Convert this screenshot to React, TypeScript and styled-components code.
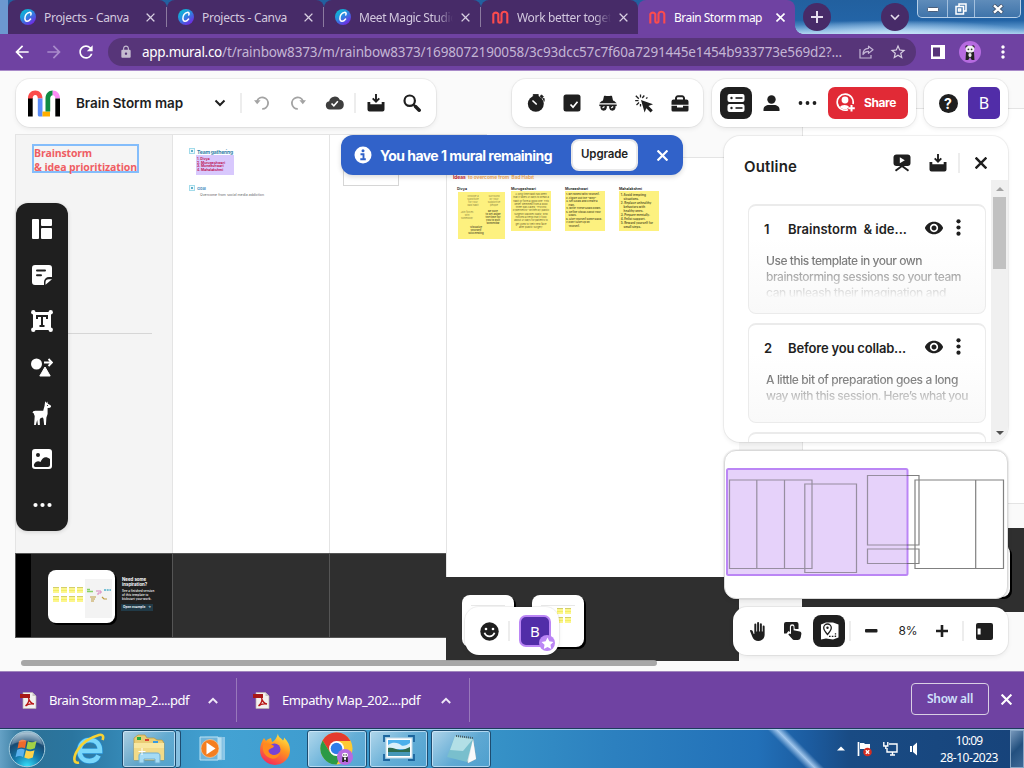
import React, { useLayoutEffect, useRef, useState } from "react";
import styled, { createGlobalStyle, css } from "styled-components";
import { MdArrowBack, MdArrowForward, MdRefresh, MdLock, MdStarBorder, MdMoreVert, MdVisibility, MdBackHand } from "react-icons/md";

const UI = `"Noto Sans", "Open Sans", sans-serif`;
const APP = `Inter, "Liberation Sans", sans-serif`;
const INK = "#1f1f1f";

const Global = createGlobalStyle`
  * { box-sizing: border-box; }
  html, body { margin: 0; padding: 0; }
  body { width: 1024px; height: 768px; overflow: hidden; font-family: ${APP}; color: ${INK}; }
  svg { display: block; flex: none; }
`;

/* Text tracked so that it fills a given measure on one line. */
const Line = styled.span`
  display: inline-block;
  white-space: pre;
  flex: none;
`;
function Tracked({ children, width }: { children: string; width: number }) {
  const ref = useRef<HTMLSpanElement>(null);
  const [space, setSpace] = useState(0);
  useLayoutEffect(() => {
    if (!ref.current) return;
    const natural = ref.current.getBoundingClientRect().width - space * children.length;
    setSpace((width - natural) / children.length);
  }, [children, width]);
  return <Line ref={ref} style={{ letterSpacing: `${space}px` }}>{children}</Line>;
}

const Page = styled.div`
  width: 1024px;
  height: 768px;
  display: flex;
  flex-direction: column;
  overflow: hidden;
`;

/* ---------- Browser chrome ---------- */
const TabStrip = styled.div`
  height: 34px;
  flex: none;
  display: flex;
  padding-left: 8px;
  background:
    linear-gradient(90deg, #6c98d0 0 8px, transparent 8px),
    radial-gradient(ellipse 130px 14px at 900px 34px, rgba(200, 228, 250, 0.9), transparent),
    linear-gradient(180deg, #22609f 0, #2364a6 60%, #5b96cc 82%, #a8d0ee 100%);
`;
const Tab = styled.div<{ $active?: boolean }>`
  position: relative;
  width: 157px;
  height: 34px;
  flex: none;
  display: flex;
  align-items: center;
  padding-left: 11px;
  font: 12px ${UI};
  color: ${(p) => (p.$active ? "#fff" : "#d3c9df")};
  background: ${(p) => (p.$active ? "#6f42a2" : "#472b68")};
  border-radius: 8px 8px 0 0;
  &:first-child {
    width: 159px;
    padding-left: 12px;
  }
  ${(p) => p.$active && css`
    &::after {
      content: "";
      position: absolute;
      right: -8px;
      bottom: 0;
      width: 8px;
      height: 8px;
      background: radial-gradient(circle at 100% 0, transparent 7.5px, #6f42a2 8px);
    }
  `}
`;
const TabTitle = styled.div<{ $fade?: boolean }>`
  width: 94px;
  margin-left: 8px;
  overflow: hidden;
  white-space: nowrap;
  ${(p) => p.$fade && "mask-image: linear-gradient(90deg, #000 82%, transparent 100%);"}
`;
const TabClose = styled.div`
  margin-left: 8px;
  display: flex;
`;
const TabRule = styled.div`
  width: 1px;
  height: 20px;
  margin-left: auto;
  background: #8b7a9f;
`;
const RoundButton = styled.div<{ $left: number }>`
  width: 28px;
  height: 28px;
  flex: none;
  margin: 3px 0 0 ${(p) => p.$left}px;
  border-radius: 50%;
  display: grid;
  place-items: center;
  background: #472b68;
`;
const WindowButtons = styled.div`
  width: 104px;
  height: 18px;
  flex: none;
  margin-left: 8px;
  display: grid;
  grid-template-columns: 29px 27px 46px;
  border: 1px solid #b6cfe8;
  border-top: 0;
  border-radius: 0 0 5px 5px;
  background: linear-gradient(#5f8cba, #3f74aa);
`;
const WindowButton = styled.div`
  display: grid;
  place-items: center;
  & + & { border-left: 1px solid #a3c0de; }
`;
const AddressBar = styled.div`
  height: 37px;
  flex: none;
  display: flex;
  align-items: center;
  padding: 0 0 0 12px;
  background: #6f42a2;
  border-bottom: 1px solid #a98ac9;
`;
const NavIcon = styled.div<{ $dim?: boolean }>`
  width: 20px;
  margin-right: 12px;
  color: ${(p) => (p.$dim ? "#a98bcb" : "#fff")};
`;
const UrlPill = styled.div`
  width: 808px;
  height: 28px;
  border-radius: 14px;
  display: flex;
  align-items: center;
  padding-left: 11px;
  background: #573579;
  color: #c4b5d5;
  font: 13.5px ${UI};
`;
const Host = styled.span`
  color: #fff;
  margin-left: 9px;
`;
const PillIcons = styled.div`
  margin-left: auto;
  margin-right: 9px;
  display: flex;
  align-items: center;
  gap: 15px;
`;
const Profile = styled.div`
  width: 22px;
  height: 22px;
  margin: 0 12px 0 14px;
  border-radius: 50%;
  background: #b66be0;
  display: grid;
  place-items: center;
`;
const SideIcon = styled.div`
  margin-left: 15px;
`;

const Cross = ({ size = 9, color = "#fff", w = 1.8 }: { size?: number; color?: string; w?: number }) => (
  <svg width={size} height={size} viewBox="0 0 10 10" stroke={color} strokeWidth={w} strokeLinecap="square">
    <path d="M1.2 1.2 8.8 8.8M8.8 1.2 1.2 8.8" />
  </svg>
);
const CanvaMark = () => (
  <svg width="16" height="16" viewBox="0 0 16 16">
    <defs>
      <linearGradient id="canva" x1="0" y1="0" x2="0.7" y2="1">
        <stop offset="0" stopColor="#00c8cf" />
        <stop offset="0.5" stopColor="#2a8be0" />
        <stop offset="1" stopColor="#7127e4" />
      </linearGradient>
    </defs>
    <circle cx="8" cy="8" r="8" fill="url(#canva)" />
    <path d="M10.800 6C11.600 4.300 10.800 3.200 9.300 3.400 6.500 3.800 4.700 7 4.900 9.600c.2 3.200 3.200 3.600 5.700.4" fill="none" stroke="#fff" strokeWidth="1.500" strokeLinecap="round" />
  </svg>
);
const MuralMark = () => (
  <svg width="17" height="16" viewBox="0 0 17 16" fill="none" stroke="#fb4b4e" strokeWidth="2.100">
    <path d="M1.300 14.500V5a3 3 0 0 1 5 0v7a1.300 1.300 0 0 0 3.200 0V5a3 3 0 0 1 5.800 0v9.500" />
  </svg>
);
const Panda = ({ size = 18 }: { size?: number }) => (
  <svg width={size} height={size} viewBox="0 0 18 18">
    <circle cx="5.500" cy="3" r="1.700" fill="#222" />
    <circle cx="12.500" cy="3" r="1.700" fill="#222" />
    <path d="M4.500 9h9l.5 9h-3l-2-3-2 3H4z" fill="#222" />
    <ellipse cx="9" cy="5.800" rx="4.800" ry="3.800" fill="#f4f4f4" />
    <ellipse cx="9" cy="12.500" rx="1.800" ry="2.300" fill="#eee" />
    <circle cx="7.200" cy="6" r="1" fill="#333" />
    <circle cx="10.800" cy="6" r="1" fill="#333" />
  </svg>
);

const tabs = [
  { title: "Projects - Canva", width: 85, canva: true },
  { title: "Projects - Canva", width: 85, canva: true },
  { title: "Meet Magic Studio", width: 98, canva: true },
  { title: "Work better together", width: 113, canva: false },
];

function Browser() {
  return (
    <>
      <TabStrip>
        {tabs.map((t, i) => (
          <Tab key={i}>
            {t.canva ? <CanvaMark /> : <MuralMark />}
            <TabTitle $fade={i > 1}><Tracked width={t.width}>{t.title}</Tracked></TabTitle>
            <TabClose><Cross color="#d8cfe2" w={1.5} /></TabClose>
            {i < 3 && <TabRule />}
          </Tab>
        ))}
        <Tab $active>
          <MuralMark />
          <TabTitle><Tracked width={88}>Brain Storm map</Tracked></TabTitle>
          <TabClose><Cross /></TabClose>
        </Tab>
        <RoundButton $left={8}>
          <svg width="12" height="12" stroke="#e6deee" strokeWidth="2"><path d="M6 0v12M0 6h12" /></svg>
        </RoundButton>
        <RoundButton $left={50}>
          <svg width="10" height="7" fill="none" stroke="#e6deee" strokeWidth="1.600"><path d="m1 1 4 4 4-4" /></svg>
        </RoundButton>
        <WindowButtons>
          <WindowButton><svg width="12" height="6"><rect x=".5" y="1.500" width="11" height="4" rx="1" fill="#fff" stroke="#4a5f7c" /></svg></WindowButton>
          <WindowButton>
            <svg width="12" height="12" fill="none" stroke="#fff" strokeWidth="1.500"><path d="M4 3V1h7v7H9" /><rect x="1" y="3.500" width="7.500" height="7.500" /><rect x="3.600" y="6" width="2" height="2" /></svg>
          </WindowButton>
          <WindowButton><svg width="12" height="10" viewBox="0 0 12 10"><path d="M1.500 1 10.500 9M10.500 1 1.500 9" stroke="#42546e" strokeWidth="4" /><path d="M2 1.400 10 8.600M10 1.400 2 8.600" stroke="#fff" strokeWidth="2.300" /></svg></WindowButton>
        </WindowButtons>
      </TabStrip>
      <AddressBar>
        <NavIcon><MdArrowBack size={20} /></NavIcon>
        <NavIcon $dim><MdArrowForward size={20} /></NavIcon>
        <NavIcon><MdRefresh size={20} /></NavIcon>
        <UrlPill>
          <MdLock size={14} color="#c5bcd0" />
          <Host><Tracked width={80}>app.mural.co</Tracked></Host>
          <Tracked width={620}>/t/rainbow8373/m/rainbow8373/1698072190058/3c93dcc57c7f60a7291445e1454b933773e569d2?...</Tracked>
          <PillIcons>
            <svg width="15" height="14" viewBox="0 0 15 14" fill="none" stroke="#c4b5d5" strokeWidth="1.200">
              <path d="M1 4v9h11v-3" /><path d="M9.500 1.200 14 4.800 9.500 8.400V6.300C7 6.300 5.200 7.500 4 9.500c0-3.500 2-6 5.500-6.200z" strokeLinejoin="round" />
            </svg>
            <MdStarBorder size={18} color="#d8cfe2" />
          </PillIcons>
        </UrlPill>
        <SideIcon><svg width="14" height="14"><rect width="14" height="14" fill="#fff" /><rect x="2" y="2.500" width="7" height="9" fill="#573579" /></svg></SideIcon>
        <Profile><Panda size={16} /></Profile>
        <MdMoreVert size={20} color="#fff" />
      </AddressBar>
    </>
  );
}

/* ---------- Mural canvas ---------- */
const Mural = styled.main`
  position: relative;
  height: 600px;
  flex: none;
  overflow: hidden;
  background: #fafafa;
`;
const Area = styled.div<{ $x: number; $y: number; $w: number; $h: number; $bg?: string; $line?: string }>`
  position: absolute;
  left: ${(p) => p.$x}px;
  top: ${(p) => p.$y}px;
  width: ${(p) => p.$w}px;
  height: ${(p) => p.$h}px;
  background: ${(p) => p.$bg ?? "#fff"};
  border: 1px solid ${(p) => p.$line ?? "#e4e4e4"};
`;
const Hairline = styled.div<{ $x: number; $y: number; $w: number; $color: string }>`
  position: absolute;
  left: ${(p) => p.$x}px;
  top: ${(p) => p.$y}px;
  width: ${(p) => p.$w}px;
  height: 1px;
  background: ${(p) => p.$color};
`;
const CanvasCard = styled(Area)`
  border-radius: 8px;
  border-color: transparent;
  box-shadow: 2px 2px 0 #000;
`;
const Note = styled.div<{ $x: number; $y: number; $size?: number; $color?: string; $bold?: boolean; $lh?: number; $w?: number; $h?: number; $bg?: string; $center?: boolean }>`
  position: absolute;
  left: ${(p) => p.$x}px;
  top: ${(p) => p.$y}px;
  ${(p) => p.$w && `width: ${p.$w}px;`}
  ${(p) => p.$h && `height: ${p.$h}px;`}
  background: ${(p) => p.$bg ?? "transparent"};
  font: ${(p) => (p.$bold ? 700 : 400)} ${(p) => p.$size ?? 4}px/${(p) => p.$lh ?? 5}px ${APP};
  color: ${(p) => p.$color ?? "#333"};
  text-align: ${(p) => (p.$center ? "center" : "left")};
  white-space: pre;
`;
const Sticky = styled(Note)`
  background: #fdf17f;
  color: #66612f;
  padding: 2px 1px 0 1px;
`;
const TitleBox = styled.div`
  position: absolute;
  left: 32px;
  top: 73px;
  width: 107px;
  height: 29px;
  border: 2px solid #84bdfb;
  color: #ef5d63;
  font: 700 10.5px/14px "Open Sans", ${APP};
  display: flex;
  flex-direction: column;
  align-items: flex-start;
`;
const Marker = styled.div<{ $y: number }>`
  position: absolute;
  left: 189px;
  top: ${(p) => p.$y}px;
  width: 6px;
  height: 6px;
  border: 1px solid #a3dbea;
  background: radial-gradient(#5fb0cb 0.8px, #effafc 1.300px);
`;
const MiniStickies = styled.div<{ $x: number; $y: number; $cols: number }>`
  position: absolute;
  left: ${(p) => p.$x}px;
  top: ${(p) => p.$y}px;
  display: grid;
  grid-template-columns: repeat(${(p) => p.$cols}, 6px);
  grid-auto-rows: 6px;
  gap: 3px 2px;
`;
const MiniSticky = styled.i`
  background: linear-gradient(#d3cf6a 1px, #fcf68c 1px 3px, #f2ed62 3px 4px, #fcf68c 4px);
`;
const OpenExample = styled.div`
  position: absolute;
  left: 121px;
  top: 533px;
  width: 32px;
  height: 7px;
  padding: 0 2px;
  display: flex;
  justify-content: space-between;
  white-space: nowrap;
  background: #213a47;
  color: #e7f2f5;
  font: 700 3.2px/7px ${APP};
`;
const HScroll = styled.div`
  position: absolute;
  left: 21px;
  top: 589px;
  width: 636px;
  height: 6px;
  border-radius: 3px;
  background: rgba(160, 160, 160, 0.92);
`;
const Specks = styled.svg`
  position: absolute;
  left: 86px;
  top: 506px;
`;

function Canvas() {
  return (
    <>
      <Area $x={15} $y={63} $w={158} $h={504} $bg="#f4f4f4" />
      <Area $x={172} $y={63} $w={158} $h={504} />
      <Area $x={329} $y={63} $w={158} $h={504} />
      <Area $x={343} $y={90} $w={56} $h={25} $line="#d6d6d6" />
      <Hairline $x={68} $y={262} $w={84} $color="#d6d6d6" />
      <Area $x={15} $y={482} $w={158} $h={85} $bg="linear-gradient(90deg,#000 15px,#202020 15px)" $line="#555" />
      <Area $x={172} $y={482} $w={158} $h={85} $bg="#2f2f2f" $line="#555" />
      <Area $x={329} $y={482} $w={158} $h={85} $bg="#2f2f2f" $line="#555" />
      <Area $x={446} $y={86} $w={294} $h={504} />
      <Area $x={446} $y={506} $w={293} $h={84} $bg="#2f2f2f" $line="#2f2f2f" />
      <Area $x={739} $y={86} $w={64} $h={515} $bg="#f5f5f5" $line="transparent" />
      <Area $x={802} $y={37} $w={240} $h={396} />
      <Area $x={739} $y={541} $w={300} $h={60} $bg="#fafafa" $line="transparent" />
      <Area $x={802} $y={457} $w={240} $h={84} $bg="#2f2f2f" $line="#2f2f2f" />
      <CanvasCard $x={900} $y={474} $w={110} $h={52} />

      <TitleBox>
        <Tracked width={58}>Brainstorm</Tracked>
        <Tracked width={103}>{"& idea prioritization"}</Tracked>
      </TitleBox>

      <Marker $y={77} />
      <Note $x={197} $y={78} $size={5} $bold $color="#2f7fa8" $lh={6}><Tracked width={36}>Team gathering</Tracked></Note>
      <Note $x={196} $y={84} $w={38} $h={20} $bg="#d8c8fd" />
      <Note $x={197} $y={87} $size={3.4} $bold $color="#c01f5c" $lh={3.6}>{"1. Divya\n2. Murugeshwari\n3. Muneeshwari\n4. Mahalakshmi"}</Note>
      <Marker $y={114} />
      <Note $x={197} $y={115} $size={4} $bold $color="#4a8fc0" $lh={5}>Goal</Note>
      <Note $x={200} $y={122} $size={3.5} $color="#666"><Tracked width={64}>Overcome from social media addiction</Tracked></Note>

      <Note $x={453} $y={103} $size={4.8} $bold $color="#c8252f" $lh={6}>Ideas</Note>
      <Note $x={468} $y={103} $size={4.8} $bold $color="#f6ad58" $lh={6}><Tracked width={66}>to overcome from  Bad Habit</Tracked></Note>
      <Note $x={457} $y={116} $size={3.6} $bold><Tracked width={10}>Divya</Tracked></Note>
      <Note $x={511} $y={116} $size={3.6} $bold><Tracked width={25}>Murugeshwari</Tracked></Note>
      <Note $x={565} $y={116} $size={3.6} $bold><Tracked width={23}>Muneeshwari</Tracked></Note>
      <Note $x={619} $y={116} $size={3.6} $bold><Tracked width={23}>Mahalakshmi</Tracked></Note>
      <Sticky $x={458} $y={121} $w={47} $h={47} />
      <Note $x={465} $y={125} $w={16} $size={2.5} $lh={2.9} $center $color="#8d8745">{"Choose a\nsubstitute\nfor your\nbad habit"}</Note>
      <Note $x={486} $y={125} $w={16} $size={2.5} $lh={2.9} $center $color="#8d8745">{"Surround\nby your\nsupportive\npeople"}</Note>
      <Note $x={459} $y={141} $w={16} $size={2.4} $lh={2.9} $center $color="#8d8745">{"Join forces\nwith\nsomebody"}</Note>
      <Note $x={483} $y={139} $w={20} $size={2.7} $lh={2.9} $bold $center $color="#6b6536">{"Be sure\nto set aside\nthe time for\nyou to quit\nsomehow"}</Note>
      <Note $x={467} $y={155} $w={18} $size={2.7} $lh={3} $bold $center $color="#6b6536">{"Visualize\nyourself\nsucceeding"}</Note>
      <Sticky $x={511} $y={120} $w={40} $h={40} $size={2.5} $lh={3.3} $center>{"A long time habit has been\nthat it takes 21 days to break a\nhabit or form a good one. This\nbelief stemmed from a book\nthree was called, \"Psycho\nCybernetics\" written by plastic\nsurgeon Maxwell Maltz, who\nnoticed a trend that it took\nabout 21 days for patients to\nget used to their new face\nafter plastic surgery."}</Sticky>
      <Sticky $x={565} $y={120} $w={40} $h={40} $size={2.6} $lh={3.55} $bold>{"1. Be Honest with Yourself.\n2. Figure Out the \"Why\"\n3. Set Goals and Create a\n    Plan.\n4. Write These Goals Down.\n5. Define Visual About Your\n    Goals.\n6. Give Yourself Some Slack.\n7. Don't Give Up on\n    Yourself."}</Sticky>
      <Sticky $x={619} $y={120} $w={40} $h={40} $size={3} $lh={4} $bold>{" 1. Avoid tempting\n     situations.\n 2. Replace unhealthy\n     behaviors with\n     healthy ones.\n 3. Prepare mentally.\n 4. Enlist support.\n 5. Reward yourself for\n     small steps."}</Sticky>

      <CanvasCard $x={48} $y={499} $w={67} $h={53} />
      <Area $x={85} $y={508} $w={27} $h={39} $bg="#f3f3f3" $line="#f3f3f3" />
      <MiniStickies $x={53} $y={516} $cols={4}>{Array.from({ length: 8 }, (_, i) => <MiniSticky key={i} />)}</MiniStickies>
      <Specks width="26" height="28">
        <path d="M1 14.500h6M1 12.500h3" stroke="#86cf67" strokeWidth="1.500" />
        <path d="M10 14h5v2h-3v2" stroke="#d983bd" fill="none" />
        <path d="M18 13h7" stroke="#4fb0cc" strokeWidth="1.500" strokeDasharray="2 .7" />
        <path d="M4 20h6M5 22h4M5 24h3M16 20l2 2h3" stroke="#bf9b40" fill="none" strokeWidth="1.200" />
      </Specks>
      <Note $x={122} $y={506} $size={4.4} $lh={5} $bold $color="#fff">{"Need some\ninspiration?"}</Note>
      <Note $x={122} $y={518} $size={3} $lh={4} $color="#ddd" $bold>{"See a finished version\nof this template to\nkickstart your work."}</Note>
      <OpenExample><span>Open example</span><span>→</span></OpenExample>

      <CanvasCard $x={462} $y={524} $w={52} $h={52} />
      <CanvasCard $x={532} $y={524} $w={52} $h={52} />
      <Hairline $x={471} $y={534} $w={34} $color="#e8e8e8" />
      <Hairline $x={541} $y={534} $w={34} $color="#e8e8e8" />
      <MiniStickies $x={557} $y={537} $cols={2}>{Array.from({ length: 4 }, (_, i) => <MiniSticky key={i} />)}</MiniStickies>
      <HScroll />
    </>
  );
}

/* ---------- Floating panels ---------- */
const Panel = styled.div<{ $x: number; $y: number; $w: number; $h: number; $r?: number }>`
  position: absolute;
  left: ${(p) => p.$x}px;
  top: ${(p) => p.$y}px;
  width: ${(p) => p.$w}px;
  height: ${(p) => p.$h}px;
  border-radius: ${(p) => p.$r ?? 14}px;
  background: #fff;
  box-shadow: 0 0 0 1px rgba(0, 0, 0, 0.05), 0 2px 5px rgba(0, 0, 0, 0.07);
  display: flex;
  align-items: center;
`;
const Slot = styled.div<{ $w?: number }>`
  width: ${(p) => p.$w ?? 36}px;
  flex: none;
  display: flex;
  align-items: center;
  justify-content: center;
`;
const Rule = styled.div`
  width: 2px;
  height: 20px;
  flex: none;
  background: #ededed;
`;
const BoardName = styled.div`
  margin-left: 16px;
  width: 126px;
  font: 600 13.5px ${APP};
`;
const Square = styled.div<{ $bg: string }>`
  width: 32px;
  height: 32px;
  flex: none;
  border-radius: 8px;
  background: ${(p) => p.$bg};
  display: grid;
  place-items: center;
`;
const Avatar = styled(Square)`
  border-radius: 5px;
  color: #fff;
  font: 16px ${UI};
`;
const Facilitator = styled(Avatar)`
  position: relative;
  border: 2px solid #bb86f5;
  border-radius: 7px;
  font-size: 15px;
`;
const StarBadge = styled.div`
  position: absolute;
  right: -6px;
  bottom: -6px;
  width: 16px;
  height: 16px;
  border-radius: 50%;
  background: #bb86f5;
  display: grid;
  place-items: center;
`;
const ShareButton = styled.div`
  width: 80px;
  height: 32px;
  border-radius: 7px;
  background: #e12a36;
  color: #fff;
  display: flex;
  align-items: center;
  gap: 9px;
  padding-left: 8px;
  padding-bottom: 1px;
  font: 700 12px ${APP};
`;
const Zoom = styled.div`
  width: 34px;
  display: flex;
  justify-content: center;
  padding-bottom: 2px;
  font: 12px ${APP};
`;

const ChevronDown = () => <svg width="12" height="8" fill="none" stroke={INK} strokeWidth="2"><path d="m1.500 1.500 4.500 4.500 4.500-4.500" /></svg>;
const Dots = ({ color = INK, r = 2.1 }: { color?: string; r?: number }) => (
  <svg width="19" height="6" fill={color}><circle cx="2.500" cy="3" r={r} /><circle cx="9.500" cy="3" r={r} /><circle cx="16.500" cy="3" r={r} /></svg>
);
const Kebab = () => <svg width="5" height="17" fill={INK}><circle cx="2.500" cy="2.300" r="2.100" /><circle cx="2.500" cy="8.500" r="2.100" /><circle cx="2.500" cy="14.700" r="2.100" /></svg>;
const ExportIcon = () => (
  <svg width="18" height="18" viewBox="0 0 18 18">
    <path d="M.5 8h2.800v2.300h11.400V8h2.800v7.500a2 2 0 0 1-2 2h-13a2 2 0 0 1-2-2z" fill={INK} />
    <path d="M9 0v7.500M5.700 4.300 9 7.600l3.300-3.300" fill="none" stroke={INK} strokeWidth="1.900" />
  </svg>
);
const Logo = () => (
  <svg width="32" height="27" viewBox="0 0 32 27">
    <path d="M0 8v18.500h4.700V8z" fill="#000" />
    <path d="M0 8.500C0 3.500 3 .5 7.300.5c4.200 0 7.200 3 7.200 8H9.800c0-2.200-.8-3.500-2.500-3.500S4.700 6.300 4.700 8.500z" fill="#fb4b4b" />
    <path d="M9.800 8.500h4.700v18H11c-.7 0-1.200-.8-1.200-2z" fill="#5b8df8" />
    <path d="M14.500 21.500h7.500v5h-7.500z" fill="#ffae00" />
    <path d="M17.500 21.500v-13c0-5 3-8 7.200-8v4.700c-1.500.3-2.500 1.300-2.500 3.300v13z" fill="#0f8a43" />
    <path d="M24.700.5c4.300 0 7.300 3 7.300 8h-4.700c0-2-.9-3.300-2.600-3.300z" fill="#fc8cf5" />
    <path d="M27.300 8.500H32v18h-4.700z" fill="#000" />
  </svg>
);
const Undo = ({ flip }: { flip?: boolean }) => (
  <svg width="16" height="14" viewBox="0 0 16 14" fill="none" stroke="#a3a3a3" strokeWidth="1.800">
    <g transform={flip ? "translate(16 0) scale(-1 1)" : undefined}>
      <path d="M3 5.200A5.700 5.700 0 1 1 8.200 12.800" /><path d="M0 4.200h6.600L3.200 8.200z" fill="#a3a3a3" stroke="none" />
    </g>
  </svg>
);
const CloudSaved = () => (
  <svg width="19" height="14" viewBox="0 0 20 15">
    <path d="M5 14.500a4.500 4.500 0 0 1-.7-8.900A6 6 0 0 1 15.600 4a5.300 5.300 0 0 1-.6 10.500z" fill="#3e3e3e" />
    <path d="m6.800 8 2.500 2.500 4.300-4.800" fill="none" stroke="#fff" strokeWidth="1.700" />
  </svg>
);
const Magnifier = () => (
  <svg width="18" height="18" viewBox="0 0 18 18" fill="none" stroke={INK}>
    <circle cx="6.700" cy="6.700" r="5.200" strokeWidth="2.200" /><path d="m10.500 10.500 2 2" strokeWidth="2" /><path d="m12.500 12.500 3.700 3.700" strokeWidth="3.500" strokeLinecap="round" />
  </svg>
);
const Timer = () => (
  <svg width="18" height="18" viewBox="0 0 18 18">
    <circle cx="8.800" cy="9.800" r="8" fill={INK} /><path d="M6.300.3H11.200v3H6.300zM13 2.500 14.500.8l1.900 1.900L15 4.200zM15.500 4.500h1.700v3" fill={INK} stroke={INK} strokeWidth=".8" />
    <path d="m6 7 3.200 3" stroke="#fff" strokeWidth="1.700" strokeLinecap="round" />
  </svg>
);
const Vote = () => (
  <svg width="18" height="18"><rect x=".5" y=".5" width="17" height="17" rx="2.500" fill={INK} /><path d="m7.500 10.500 2.500 2.700 4.500-5.400" fill="none" stroke="#fff" strokeWidth="1.700" /></svg>
);
const Incognito = () => (
  <svg width="18" height="17" viewBox="0 0 18 17">
    <path d="M5 1C6 .2 7.500 1 9 1s3-.8 4 0l1.200 5.200H3.800z" fill={INK} />
    <path d="M3 5.800h12l2.700 2.400H.3z" fill={INK} />
    <path d="M.3 9.500h17.400v1.600H.3z" fill={INK} />
    <path d="M1.500 10h6.300v3a3.200 3.200 0 0 1-6.300 0zM10.200 10h6.300v3a3.200 3.200 0 0 1-6.300 0z" fill={INK} />
    <path d="m3.500 13 2-1.500M12.200 13l2-1.500" stroke="#fff" strokeWidth="1.200" />
  </svg>
);
const Laser = () => (
  <svg width="19" height="19" viewBox="0 0 19 19">
    <path d="M6 6l12 4.300-4.500 1.700 4.300 4.300-2.200 2.200-4.300-4.300L9.600 18.500z" fill={INK} />
    <path d="M5.500 3.500V.5M3.800 4.800l-3-3M3.500 6.700H.2M4 8.500l-2.500 2.500M7.300 4l2-2.500M11 4.500l1.500-1M5.500 10v2.500" stroke={INK} strokeWidth="1.300" />
  </svg>
);
const Toolbox = () => (
  <svg width="18" height="17" viewBox="0 0 18 17">
    <path d="M5 5V3.200A1.900 1.900 0 0 1 6.900 1.300h4.200A1.900 1.900 0 0 1 13 3.200V5" fill="none" stroke={INK} strokeWidth="2" />
    <path d="M2.500 4.500h13a2 2 0 0 1 2 2v3.200H.5V6.500a2 2 0 0 1 2-2zM.5 10.800H6v1.700h6v-1.700h5.500V15a1.500 1.500 0 0 1-1.500 1.500H2A1.500 1.500 0 0 1 .5 15z" fill={INK} />
  </svg>
);
const OutlineIcon = () => (
  <svg width="18" height="18"><rect x=".5" y="0" width="17" height="8" rx="2" fill="#fff" /><rect x=".5" y="10" width="17" height="8" rx="2" fill="#fff" /><g fill={INK}><circle cx="4.500" cy="4" r="1.200" /><circle cx="4.500" cy="14" r="1.200" /><rect x="8.500" y="3.200" width="7" height="1.600" /><rect x="8.500" y="13.200" width="7" height="1.600" /></g></svg>
);
const Person = () => (
  <svg width="17" height="17" fill={INK}><circle cx="8.500" cy="4.500" r="4.200" /><path d="M.5 16v-1.500c0-3 2.500-4.500 5.500-4.500h5c3 0 5.500 1.500 5.500 4.500V16z" /></svg>
);
const SharePerson = () => (
  <svg width="19" height="19" viewBox="0 0 19 19" fill="none" stroke="#fff">
    <path d="M12 16.700A8 8 0 1 1 17 11" strokeWidth="1.700" /><circle cx="9" cy="7" r="3.400" fill="#fff" stroke="none" />
    <path d="M4 14c1-2.800 8-2.800 9 0l-2 2c-2 .7-4 .5-6-1z" fill="#fff" stroke="none" /><path d="M15.500 12v6.500M12.300 15.300h6.500" strokeWidth="2" />
  </svg>
);
const Help = styled.div`
  width: 19px;
  height: 19px;
  border-radius: 50%;
  background: ${INK};
  color: #fff;
  font: 700 14px/19px ${APP};
  text-align: center;
`;

function TopBars() {
  return (
    <>
      <Panel $x={16} $y={8} $w={420} $h={48}>
        <Slot $w={12} />
        <Logo />
        <BoardName><Tracked width={107}>Brain Storm map</Tracked></BoardName>
        <Slot><ChevronDown /></Slot>
        <Slot $w={2} />
        <Rule />
        <Slot $w={40}><Undo /></Slot>
        <Slot $w={32}><Undo flip /></Slot>
        <Slot $w={40}><CloudSaved /></Slot>
        <Rule />
        <Slot $w={40}><ExportIcon /></Slot>
        <Slot $w={32}><Magnifier /></Slot>
      </Panel>
      <Panel $x={512} $y={8} $w={191} $h={48}>
        <Slot $w={6} />
        <Slot><Timer /></Slot>
        <Slot><Vote /></Slot>
        <Slot><Incognito /></Slot>
        <Slot><Laser /></Slot>
        <Slot><Toolbox /></Slot>
      </Panel>
      <Panel $x={712} $y={8} $w={204} $h={48}>
        <Slot $w={8} />
        <Square $bg={INK}><OutlineIcon /></Square>
        <Slot $w={39}><Person /></Slot>
        <Slot $w={33}><Dots r={1.900} /></Slot>
        <Slot $w={4} />
        <ShareButton><SharePerson /><Tracked width={32}>Share</Tracked></ShareButton>
      </Panel>
      <Panel $x={924} $y={8} $w={84} $h={48}>
        <Slot $w={44}><Slot $w={4} /><Help>?</Help></Slot>
        <Avatar $bg="#512da8">B</Avatar>
      </Panel>
    </>
  );
}

/* Side tool rail */
const Rail = styled.nav`
  position: absolute;
  left: 16px;
  top: 132px;
  width: 52px;
  height: 328px;
  padding: 3px 0;
  border-radius: 12px;
  background: ${INK};
  box-shadow: 0 1px 4px rgba(0, 0, 0, 0.15);
  display: grid;
  grid-auto-rows: 46px;
  place-items: center;
`;
const ToolRail = () => (
  <Rail>
    <svg width="20" height="20" fill="#fff"><rect width="7" height="20" rx="1" /><rect x="9" width="11" height="7" rx="1" /><rect x="9" y="9" width="11" height="11" rx="1" /></svg>
    <svg width="20" height="20"><path d="M3 0h14a3 3 0 0 1 3 3v9h-3a5 5 0 0 0-5 5V20H3a3 3 0 0 1-3-3V3a3 3 0 0 1 3-3z" fill="#fff" /><path d="M5 5.500h8M5 10.300h4" stroke={INK} strokeWidth="2" strokeLinecap="round" /><path d="M13.500 19.800v-2.300a3.300 3.300 0 0 1 3.300-3.300H20z" fill="#fff" /></svg>
    <svg width="22" height="22" fill="#fff"><rect x="2" y="2" width="18" height="18" /><circle cx="2.300" cy="2.300" r="2.200" /><circle cx="19.700" cy="2.300" r="2.200" /><circle cx="2.300" cy="19.700" r="2.200" /><circle cx="19.700" cy="19.700" r="2.200" /><path d="M6 9V6h10v3M11 6v10M8.500 16h5" fill="none" stroke={INK} strokeWidth="2" /></svg>
    <svg width="22" height="19"><circle cx="5.500" cy="6" r="5.500" fill="#fff" /><path d="m14 9 5.200 9H8.800z" fill="#fff" stroke="#fff" strokeLinejoin="round" /><path d="M13 4.500h8M17.500 1 21 4.500 17.500 8" fill="none" stroke="#fff" strokeWidth="1.900" /></svg>
    <svg width="20" height="24" viewBox="0 0 20 24" fill="#fff"><path d="M13.200.3 14.500 2l.8-1.500.5 2.200 2.800 1.500.5 1.300-1 1.200-2.500.3v6l-1.200 3.500-.5 8h-1.700l-.7-6.500-.6-1.500-2.200.5-1 1.500.2 6H6l-.8-5.500L3.800 24H2.100l.6-9L1.500 12 .5 12 1.200 10.300c2-.8 6-.3 10-.6L12.500 5z" /><circle cx="15.500" cy="4.500" r=".6" fill={INK} /></svg>
    <svg width="20" height="20"><rect width="20" height="20" rx="3" fill="#fff" /><circle cx="6" cy="6" r="2" fill={INK} /><path d="M2 15.500c1.500-3 4-4 6.500-2.500 2-4.500 5-6.500 9.500-3v6a2 2 0 0 1-2 2H3.500c-1.200 0-2-1-1.500-2.500z" fill={INK} /></svg>
    <Dots color="#fff" />
  </Rail>
);

/* Upgrade banner */
const Banner = styled.div`
  position: absolute;
  left: 341px;
  top: 64px;
  width: 342px;
  height: 40px;
  padding-left: 13px;
  border-radius: 12px;
  background: #3162c9;
  box-shadow: 0 2px 5px rgba(0, 0, 0, 0.15);
  display: flex;
  align-items: center;
  color: #fff;
  font: 700 14px ${APP};
`;
const BannerText = styled.div`
  width: 191px;
  margin-left: 8px;
`;
const Upgrade = styled.div`
  width: 67px;
  height: 32px;
  margin-right: 19px;
  border: 2px solid #e9e9ea;
  border-radius: 8px;
  background: #fff;
  color: ${INK};
  display: grid;
  place-items: center;
  font: 600 11.500px ${APP};
  padding-bottom: 2px;
`;
const UpgradeBanner = () => (
  <Banner>
    <svg width="18" height="18"><circle cx="9" cy="9" r="8.500" fill="#fff" /><circle cx="9" cy="4.800" r="1.500" fill="#3162c9" /><path d="M6.500 8.200H9.500V13M6.300 13.300h5.500" fill="none" stroke="#3162c9" strokeWidth="1.900" /></svg>
    <BannerText><Tracked width={172}>You have 1 mural remaining</Tracked></BannerText>
    <Upgrade><Tracked width={47}>Upgrade</Tracked></Upgrade>
    <Cross size={11} w={2} />
  </Banner>
);

/* Outline panel */
const OutlinePanel = styled(Panel)`
  flex-direction: column;
  align-items: stretch;
  overflow: hidden;
`;
const OutlineHead = styled.div`
  height: 44px;
  flex: none;
  display: flex;
  align-items: center;
  padding: 10px 0 0 20px;
`;
const OutlineTitle = styled.div`
  width: 148px;
  padding-top: 6px;
  font: 600 15px ${APP};
`;
const OutlineBody = styled.div`
  flex: 1;
  display: flex;
  min-height: 0;
`;
const CardList = styled.div`
  width: 267px;
  padding: 24px 5px 0 24px;
  display: flex;
  flex-direction: column;
  gap: 9px;
  overflow: hidden;
`;
const OutlineCard = styled.div<{ $h: number }>`
  height: ${(p) => p.$h}px;
  flex: none;
  border: 1px solid #ebebeb;
  border-top-width: 2px;
  border-radius: 8px;
  background: linear-gradient(#fff 30%, #f9f9f9);
  overflow: hidden;
`;
const CardHead = styled.div`
  height: 43px;
  display: flex;
  align-items: center;
  padding-left: 15px;
  font: 600 13px ${APP};
`;
const CardNumber = styled.div`
  width: 24px;
  padding-top: 2px;
`;
const CardTitle = styled.div`
  width: 136px;
  padding-top: 2px;
`;
const CardText = styled.div<{ $h: number }>`
  height: ${(p) => p.$h}px;
  padding-left: 17px;
  margin-top: 4px;
  display: flex;
  flex-direction: column;
  align-items: flex-start;
  font: 500 12px/16px ${APP};
  color: #666;
  overflow: hidden;
  mask-image: linear-gradient(#000 0, rgba(0, 0, 0, 0.75) 30%, rgba(0, 0, 0, 0.16) 88%, transparent 100%);
`;
const Scrollbar = styled.div`
  width: 17px;
  background: #f0f0f0;
  display: flex;
  flex-direction: column;
  align-items: center;
  padding: 7px 0;
`;
const Thumb = styled.div`
  width: 13px;
  height: 72px;
  margin: 6px 0 auto;
  background: #c1c1c1;
`;

const cards = [
  { n: "1", title: "Brainstorm  & ide...", tw: 119, h: 110, th: 45, lines: [["Use this template in your own", 156], ["brainstorming sessions so your team", 195], ["can unleash their imagination and", 180]] },
  { n: "2", title: "Before you collab...", tw: 118, h: 100, th: 36, lines: [["A little bit of preparation goes a long", 192], ["way with this session. Here’s what you", 202]] },
] as const;

const Outline = () => (
  <OutlinePanel $x={724} $y={65} $w={284} $h={306} $r={16}>
    <OutlineHead>
      <OutlineTitle><Tracked width={53}>Outline</Tracked></OutlineTitle>
      <Slot $w={20}>
        <svg width="18" height="18" viewBox="0 0 18 18"><rect x=".5" y=".5" width="17" height="11.500" rx="3" fill={INK} /><path d="m6.800 3.300 5 3-5 3z" fill="#fff" /><path d="M2.500 16.800 9 12l6.500 4.800" fill="none" stroke={INK} strokeWidth="1.900" /></svg>
      </Slot>
      <Slot $w={16} />
      <Slot $w={20}><ExportIcon /></Slot>
      <Slot $w={10} />
      <Rule />
      <Slot $w={41}><Cross size={12} color={INK} w={2} /></Slot>
    </OutlineHead>
    <OutlineBody>
      <CardList>
        {cards.map((c) => (
          <OutlineCard key={c.n} $h={c.h}>
            <CardHead>
              <CardNumber>{c.n}</CardNumber>
              <CardTitle><Tracked width={c.tw}>{c.title}</Tracked></CardTitle>
              <MdVisibility size={20} />
              <Slot $w={28}><Kebab /></Slot>
            </CardHead>
            <CardText $h={c.th}>
              {c.lines.map(([text, w]) => <Tracked key={text} width={w}>{text}</Tracked>)}
            </CardText>
          </OutlineCard>
        ))}
        <OutlineCard $h={100} />
      </CardList>
      <Scrollbar>
        <svg width="8" height="4"><path d="M0 4 4 0l4 4z" fill="#a3a3a3" /></svg>
        <Thumb />
        <svg width="8" height="4"><path d="M0 0h8L4 4z" fill="#505050" /></svg>
      </Scrollbar>
    </OutlineBody>
  </OutlinePanel>
);

const MapPanel = styled(Panel)`
  border: 1px solid #d9d9d9;
`;
const Minimap = () => (
  <MapPanel $x={724} $y={379} $w={284} $h={149} $r={12}>
    <svg width="282" height="147" viewBox="725 451 282 147" fill="none" stroke="#555" strokeOpacity=".75" strokeWidth="1.200">
      <rect x="727" y="469" width="180.500" height="106" rx="1.500" fill="#e6d2fa" stroke="#bb86f5" strokeOpacity="1" strokeWidth="2" />
      <g strokeOpacity=".55"><path d="M729.500 480H812v88.500H729.500zM756.800 480v88.500M784.500 480v88.500M804.800 484h51.700v88.500h-51.700z" />
        <path d="M907 475.500h-39.500V545H907M907 549h-39.500v14.500H907" /></g>
      <path d="M907 475.500h12V545h-12M907 549h12v14.500h-12M915 480h88.500v88.500H915zM975.700 480v88.500" />
    </svg>
  </MapPanel>
);

function BottomBars() {
  return (
    <>
      <Panel $x={733} $y={536} $w={275} $h={48}>
        <Slot $w={6} />
        <Slot><MdBackHand size={19} /></Slot>
        <Slot>
          <svg width="18" height="18" viewBox="0 0 18 18"><path d="M2 0h10.500a2 2 0 0 1 2 2v5h-3l-1-.5V4.500a2.300 2.300 0 0 0-4.600 0V10L4.500 9l-2 2.500H0V2a2 2 0 0 1 2-2z" fill={INK} /><path d="M7 5a1.300 1.300 0 0 1 2.600 0v3.200l6.200 1.400c1 .3 1.700 1 1.600 2.200l-.7 3.700A3 3 0 0 1 14 18h-3.500c-1 0-1.600-.4-2.200-1l-4-4.500 1.200-1L7 12z" fill={INK} /></svg>
        </Slot>
        <Slot $w={2} />
        <Square $bg={INK}>
          <svg width="19" height="18" viewBox="0 0 19 18"><path d="M1 2.500 6 .5h7l5.500 2v13l-5.500 2-7-1-5 1z" fill="#fff" /><path d="M7.500 12.500C4 8.500 3.700 7.500 3.700 5.800a3.800 3.800 0 0 1 7.600 0c0 1.700-.3 2.700-3.800 6.700z" fill="#fff" stroke={INK} strokeWidth="1.300" /><circle cx="7.500" cy="5.800" r="1.200" fill={INK} /><path d="M9 14.300h6.500v-3" fill="none" stroke={INK} strokeWidth="1.300" strokeDasharray="1.600 1.200" /></svg>
        </Square>
        <Slot $w={4} />
        <Rule />
        <Slot $w={40}><svg width="13" height="4"><rect width="12.500" height="3.600" rx="1" fill={INK} /></svg></Slot>
        <Zoom><Tracked width={19}>8%</Tracked></Zoom>
        <Slot $w={34}><svg width="12" height="12" stroke={INK} strokeWidth="2.600"><path d="M6 0v12M0 6h12" /></svg></Slot>
        <Slot $w={3} />
        <Rule />
        <Slot $w={40}><svg width="17" height="17"><rect width="17" height="17" rx="2" fill={INK} /><rect x="1.600" y="5.500" width="3" height="6" fill="#fff" /></svg></Slot>
      </Panel>
      <Panel $x={465} $y={536} $w={94} $h={48}>
        <Slot $w={5} />
        <Slot $w={38}><svg width="19" height="19"><circle cx="9.500" cy="9.500" r="9.200" fill={INK} /><g fill="#fff"><circle cx="6" cy="7" r="1.300" /><circle cx="13" cy="7" r="1.300" /></g><path d="M4.500 10.800a5.300 5.300 0 0 0 10 0" fill="none" stroke="#fff" strokeWidth="1.800" /></svg></Slot>
        <Rule />
        <Slot $w={9} />
        <Facilitator $bg="#512da8">B
          <StarBadge><svg width="13" height="13" viewBox="0 0 24 24"><path d="m12 1 3.400 7 7.600 1.100-5.500 5.300 1.300 7.600L12 18.400 5.200 22l1.300-7.600L1 9.100 8.600 8z" fill="#fff" /></svg></StarBadge>
        </Facilitator>
      </Panel>
    </>
  );
}

/* ---------- Downloads shelf ---------- */
const Shelf = styled.div`
  height: 57px;
  flex: none;
  display: flex;
  align-items: center;
  background: #6f42a2;
  border-top: 1px solid #a085bd;
  color: #fff;
  font: 13px ${UI};
`;
const Download = styled.div<{ $w: number; $pad: number }>`
  width: ${(p) => p.$w}px;
  height: 44px;
  padding: 0 18px 0 ${(p) => p.$pad}px;
  border-right: 1px solid #9878bb;
  display: flex;
  align-items: center;
  gap: 12px;
`;
const Push = styled.div`
  margin-left: auto;
`;
const ShowAll = styled.div`
  width: 78px;
  height: 32px;
  margin: 0 12px 3px auto;
  border: 1px solid #d9cfe4;
  border-radius: 4px;
  display: grid;
  place-items: center;
  color: #cfe0fb;
  font: 600 12px ${UI};
`;
const CloseShelf = styled.div`
  margin: 0 12px 2px 0;
`;
const Pdf = () => (
  <svg width="17" height="17"><path d="M3 .5h9.500L16 4v12.500H3z" fill="#f2f0ee" stroke="#b9b2ae" strokeWidth=".7" /><path d="M12.500.5V4H16z" fill="#c9c5c2" /><path d="M0 2h10v4H0z" fill="#a81717" /><path d="M8.500 6c1.500 3-1 6-3 8 2-1.800 5.500-2.500 8.500-2-3-.5-4.500-2.500-5.500-6z" fill="none" stroke="#b81818" strokeWidth="1.300" /></svg>
);
const Up = () => <svg width="10" height="7" fill="none" stroke="#efe8f6" strokeWidth="1.900"><path d="m.8 6 4.200-4.200L9.200 6" /></svg>;

const Downloads = () => (
  <Shelf>
    <Download $w={237} $pad={20}><Pdf /><Tracked width={140}>Brain Storm map_2....pdf</Tracked><Push><Up /></Push></Download>
    <Download $w={233} $pad={16}><Pdf /><Tracked width={138}>Empathy Map_202....pdf</Tracked><Push><Up /></Push></Download>
    <ShowAll><Tracked width={46}>Show all</Tracked></ShowAll>
    <CloseShelf><Cross size={11} w={1.900} /></CloseShelf>
  </Shelf>
);

/* ---------- Taskbar ---------- */
const Bar = styled.div`
  height: 40px;
  flex: none;
  display: flex;
  align-items: center;
  border-top: 1px solid #1e3c5d;
  box-shadow: inset 0 1px 0 rgba(190, 220, 245, 0.8);
  color: #fff;
  font: 12px ${UI};
  background:
    linear-gradient(45deg, transparent 40%, rgba(184, 216, 248, 0.85) 50%, transparent 60%) 768px 0 / 56px 40px no-repeat,
    linear-gradient(90deg, #65a1c5 0, #2d7297 2.500%, #2a759f 7%, #3990bf 14%, #43a2d3 22%, #3692c7 48%, #2c80bf 60%, #2270b8 74%, #1c5ca0 79%, #194b84 83%, #17437a 100%);
`;
const Task = styled.div<{ $w: number; $open?: boolean; $gap?: number }>`
  width: ${(p) => p.$w}px;
  height: 38px;
  flex: none;
  margin-left: ${(p) => p.$gap ?? 0}px;
  display: grid;
  place-items: center;
  ${(p) => p.$open && css`
    border: 1px solid #1d4c70;
    border-radius: 3px;
    box-shadow: inset 0 0 0 1px rgba(220, 240, 255, 0.65);
    background: linear-gradient(135deg, rgba(255, 255, 255, 0.6), rgba(255, 255, 255, 0.2) 55%, rgba(255, 255, 255, 0.12));
  `}
`;
const Stack = styled.div`
  width: 5px;
  height: 38px;
  border: 1px solid #1d4c70;
  border-left: 0;
  border-radius: 0 3px 3px 0;
  background: rgba(220, 240, 255, 0.45);
`;
const Tray = styled.div`
  margin-left: auto;
  display: flex;
  align-items: center;
`;
const TrayIcons = styled.div`
  width: 81px;
  display: flex;
  align-items: center;
  justify-content: space-between;
`;
const Clock = styled.div`
  width: 60px;
  margin: 0 11px 0 21px;
  display: flex;
  flex-direction: column;
  align-items: center;
  line-height: 17px;
`;
const Peek = styled.div`
  width: 14px;
  height: 38px;
  border: 1px solid #86a6c6;
  background: linear-gradient(135deg, #7797bb, #23507f 50%, #3e6996);
`;

const Start = () => (
  <svg width="38" height="38" viewBox="0 0 38 38">
    <defs>
      <radialGradient id="orb" cx=".5" cy="1" r=".95"><stop offset="0" stopColor="#35e2fc" /><stop offset=".4" stopColor="#167cad" /><stop offset=".75" stopColor="#174a73" /><stop offset="1" stopColor="#93b3c8" /></radialGradient>
    </defs>
    <circle cx="19" cy="19" r="17.800" fill="url(#orb)" stroke="#a3cbdc" strokeWidth="1" />
    <path d="M11 11c3-1.800 5-1.500 7.500-.2l-1.500 7.500c-2.500-1.300-4.500-1.200-7.500.2z" fill="#ee6a2c" />
    <path d="M19.800 11.300c3 1.500 5.500 1 8.700-.4l-1.700 7.400c-3 1.500-5.500 1.500-8.400.1z" fill="#a2d146" />
    <path d="M9.200 19.800c3-1.300 5-1.300 7.500 0L15 27c-2.500-1.300-4.500-1.200-7.500.2z" fill="#5ab1ee" />
    <path d="M18 20.300c3 1.500 5.500 1.300 8.500 0L24.800 27.500c-3 1.500-5.500 1.500-8.500 0z" fill="#fed34b" />
    <path d="M3.500 15C6 5 12 2.500 19 2.500S32 5 34.500 15c-7-5-24-5-31 0z" fill="#fff" opacity=".2" />
  </svg>
);
const Explorer = () => (
  <svg width="32" height="30" viewBox="0 0 32 30">
    <path d="M1 4 5 1h7l2 3h7l3 2h5l2 3v17H1z" fill="#e9cd75" stroke="#bd9737" strokeWidth=".7" />
    <path d="M4 3h4v3H4z" fill="#27ac3a" /><path d="M12 5h4v2h-4z" fill="#db3e2c" /><path d="M20 7h5v2h-5z" fill="#389bdf" />
    <path d="M1 9h30v17H1z" fill="#f8e7a0" /><path d="M1 14h30v12H1z" fill="#f0d47c" opacity=".7" />
    <path d="M6 29v-7c0-2 1-3 3-3h15c2 0 3 1 3 3v7h-5v-4H11v4z" fill="#a5dbf4" stroke="#6eaed2" /><path d="M9 14v7M5.500 17.500h7" stroke="#fff" />
  </svg>
);
const IE = () => (
  <svg width="34" height="34" viewBox="0 0 34 34" fill="none">
    <path d="M26.500 23.500C25 27 21.500 29 17.500 29c-6 0-10-4-10-10.500S12 8 18 8c6.500 0 10 4.500 10 11H9" stroke="#258ed2" strokeWidth="6" />
    <path d="M26.500 23.500C25 27 21.500 29 17.500 29c-6 0-10-4-10-10.500S12 8 18 8c6.500 0 10 4.500 10 11H9" stroke="#79d7fb" strokeWidth="4.600" />
    <path d="M7 30.500C1 32 1 25 6 17.500S20 5 27 3c4-1 5 1.500 3.500 5" stroke="#f7d234" strokeWidth="2.600" />
  </svg>
);
const Player = () => (
  <svg width="28" height="26"><path d="M9 1h17v23H9z" fill="#8ec8e8" /><path d="M6 1h17v23H6z" fill="#b4ddef" stroke="#6fb4d6" strokeWidth=".6" /><path d="M1 1h18v23H1z" fill="#6fb4da" stroke="#b9e2f5" /><circle cx="11" cy="12.500" r="9" fill="#f47e20" stroke="#ffd0a0" strokeWidth=".6" /><path d="m7.500 6.500 9 6-9 6z" fill="#fff" /></svg>
);
const Firefox = () => (
  <svg width="32" height="32" viewBox="0 0 32 32">
    <defs><linearGradient id="fox" x1=".8" y1="0" x2=".3" y2="1"><stop offset="0" stopColor="#fff04a" /><stop offset=".45" stopColor="#ff9420" /><stop offset="1" stopColor="#f5285c" /></linearGradient></defs>
    <path d="M19 .5c0 4 3 4 5 7 1-1 1-2 1-3 4 4 6 8 6 12.500A15 15 0 0 1 1 17C1 12 3 8 5 5l2 3c1.500-2 3.500-2.500 5-3l1 4c3-1 5-5 6-8.500z" fill="url(#fox)" />
    <circle cx="15.500" cy="16.500" r="6" fill="#7643d6" /><path d="M4 12c3-3 8-1 11 1-1 3-5 2-6 5 1 4 8 6 12 1 0 5-5 8-10 6C5 23 3 17 4 12z" fill="#ff8a1e" />
  </svg>
);
const Chrome = () => (
  <svg width="34" height="34" viewBox="0 0 34 34">
    <circle cx="16.500" cy="16.500" r="16" fill="#fcc934" />
    <path d="M16.500 9H30.500A16 16 0 0 0 2.600 8.500L10 20.200z" fill="#e33b2e" />
    <path d="M2.600 8.500A16 16 0 0 0 16.500 32.500L23 20.200 10 20.200z" fill="#2b9a46" />
    <circle cx="16.500" cy="16.500" r="7.500" fill="#fff" /><circle cx="16.500" cy="16.500" r="5.800" fill="#2e7de9" />
    <circle cx="25" cy="25" r="8" fill="#b66be0" /><g transform="translate(19.800 19.500) scale(.58)"><path d="M4.500 9h9l.5 9h-3l-2-3-2 3H4z" fill="#222" /><ellipse cx="9" cy="6" rx="5" ry="4" fill="#fff" /><circle cx="7" cy="6" r="1.200" fill="#222" /><circle cx="11" cy="6" r="1.200" fill="#222" /><ellipse cx="9" cy="12.500" rx="1.800" ry="2.300" fill="#fff" /></g>
  </svg>
);
const Photos = () => (
  <svg width="32" height="28"><path d="M1 7V1h6M25 1h6v6M31 19v6h-6M7 25H1v-6" fill="none" stroke="#1c659e" strokeWidth="1.800" /><rect x="3" y="3" width="26" height="20" fill="#fff" stroke="#bfd7e6" /><rect x="5" y="5" width="22" height="16" fill="#4bb0ec" /><path d="M5 10c5-4 11-2 13 0s6 0 9-2v6H5z" fill="#d7effa" /><path d="M5 13c5-1 8 2 12 2s7-2 10-3v5H5z" fill="#2c6b4e" /><path d="M5 17h22v4H5z" fill="#4597b8" /></svg>
);
const Notepad = () => (
  <svg width="32" height="30"><path d="M11 3 28 5l3 20-8 4z" fill="#d9e4e6" stroke="#8fa5ab" strokeWidth=".6" /><path d="M28 5l3 20-8 4z" fill="#f9fafb" /><path d="M10 2 28 5 22 28 2 23z" fill="#79bfcd" /><path d="M10 2 28 5 18 17 5 16z" fill="#b3dfe6" /><path d="m11 2 17 2" stroke="#465b62" strokeWidth="2" strokeDasharray="1 1" /></svg>
);

const Taskbar = () => (
  <Bar>
    <Task $w={38} $gap={8}><Start /></Task>
    <Task $w={34} $gap={26}><IE /></Task>
    <Task $w={54} $gap={16} $open><Explorer /></Task>
    <Stack />
    <Task $w={30} $gap={17}><Player /></Task>
    <Task $w={34} $gap={30}><Firefox /></Task>
    <Task $w={60} $gap={15} $open><Chrome /></Task>
    <Task $w={59} $gap={2} $open><Photos /></Task>
    <Task $w={60} $gap={3} $open><Notepad /></Task>
    <Tray>
      <TrayIcons>
        <svg width="8" height="5"><path d="M0 4.500 4 .5l4 4z" fill="#fff" /></svg>
        <svg width="15" height="16"><path d="M1.500 1v14" stroke="#fff" strokeWidth="1.700" /><path d="M3 2h4l1 1h5v6H8L7 8H3z" fill="#fff" /><circle cx="10.500" cy="11" r="4.300" fill="#d52d20" /><path d="m8.800 9.300 3.400 3.400M12.200 9.300l-3.400 3.400" stroke="#fff" strokeWidth="1.400" /></svg>
        <svg width="15" height="15" fill="none" stroke="#fff" strokeWidth="1.400"><path d="M6 3h8v8H4V7M7 14h5M9.500 11v3" /><path d="M.8 1v4h4V1M2.800 5v3" /></svg>
        <svg width="8" height="14" fill="#fff"><path d="M0 4h2v6H0zM3 4l4-3.500v13L3 10z" /></svg>
      </TrayIcons>
      <Clock><Tracked width={27}>10:09</Tracked><Tracked width={58}>28-10-2023</Tracked></Clock>
      <Peek />
    </Tray>
  </Bar>
);

export default function App() {
  return (
    <Page>
      <Global />
      <Browser />
      <Mural>
        <Canvas />
        <TopBars />
        <UpgradeBanner />
        <Outline />
        <Minimap />
        <BottomBars />
        <ToolRail />
      </Mural>
      <Downloads />
      <Taskbar />
    </Page>
  );
}
